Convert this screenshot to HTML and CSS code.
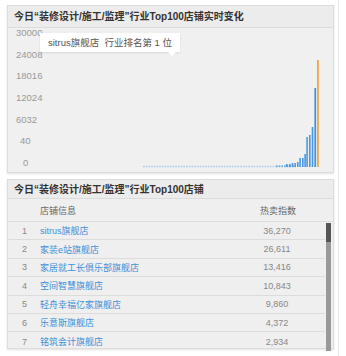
FILE: index.html
```html
<!DOCTYPE html>
<html lang="zh-CN">

<head>
  <meta charset="UTF-8">
  <meta name="viewport" content="width=device-width, initial-scale=1.0">
  <title>行业Top100店铺</title>
  <link rel="stylesheet" href="styles.css">
</head>

<body>
  <div class="page">
    <!-- 实时变化 -->
    <div class="panel chart-panel">
      <div class="panel-title">今日“装修设计/施工/监理”行业Top100店铺实时变化</div>
      <div class="chart">
        <div class="y-axis">
          <span>30000</span>
          <span>24008</span>
          <span>18016</span>
          <span>12024</span>
          <span>6032</span>
          <span class="short">40</span>
          <span class="zero">0</span>
        </div>
        <svg class="plot" width="285" height="145" viewBox="0 0 285 145">
          <line x1="99" y1="138.5" x2="232" y2="138.5" stroke="#a9cdee" stroke-width="1.4" stroke-dasharray="1.6 1.1" />
          <line x1="232" y1="138.2" x2="252" y2="138.2" stroke="#6aaae6" stroke-width="2" stroke-dasharray="1.6 1.1" />
          <rect x="242" y="136" width="1.6" height="3" fill="#4a97e0" />
          <rect x="245" y="136" width="1.6" height="3" fill="#4a97e0" />
          <rect x="247.7" y="135" width="1.6" height="4" fill="#4a97e0" />
          <rect x="250.3" y="135" width="1.6" height="4" fill="#4a97e0" />
          <rect x="253" y="134" width="1.6" height="5" fill="#4a97e0" />
          <rect x="255.3" y="130" width="1.6" height="9" fill="#4a97e0" />
          <rect x="258" y="130" width="1.6" height="9" fill="#4a97e0" />
          <rect x="260.3" y="126" width="1.6" height="13" fill="#4a97e0" />
          <rect x="262.3" y="109" width="1.6" height="30" fill="#4a97e0" />
          <rect x="265" y="107" width="1.6" height="32" fill="#4a97e0" />
          <rect x="267.7" y="99" width="1.6" height="40" fill="#4a97e0" />
          <rect x="270.4" y="60" width="1.7" height="79" fill="#3d8ee0" />
          <rect x="273" y="32" width="1.8" height="107" fill="#f2a644" />
        </svg>
        <div class="tooltip">sitrus旗舰店&nbsp;&nbsp;行业排名第 1 位</div>
      </div>
    </div>

    <!-- 店铺列表 -->
    <div class="panel list-panel">
      <div class="panel-title">今日“装修设计/施工/监理”行业Top100店铺</div>
      <div class="list-head">
        <span class="col-rank"></span>
        <span class="col-name">店铺信息</span>
        <span class="col-value">热卖指数</span>
      </div>
      <div class="list-body">
        <div class="rows">
          <div class="row"><span class="col-rank">1</span><a class="col-name">sitrus旗舰店</a><span class="col-value">36,270</span></div>
          <div class="row"><span class="col-rank">2</span><a class="col-name">家装e站旗舰店</a><span class="col-value">26,611</span></div>
          <div class="row"><span class="col-rank">3</span><a class="col-name">家居就工长俱乐部旗舰店</a><span class="col-value">13,416</span></div>
          <div class="row"><span class="col-rank">4</span><a class="col-name">空间智慧旗舰店</a><span class="col-value">10,843</span></div>
          <div class="row"><span class="col-rank">5</span><a class="col-name">轻舟幸福亿家旗舰店</a><span class="col-value">9,860</span></div>
          <div class="row"><span class="col-rank">6</span><a class="col-name">乐意斯旗舰店</a><span class="col-value">4,372</span></div>
          <div class="row"><span class="col-rank">7</span><a class="col-name">铭筑会计旗舰店</a><span class="col-value">2,934</span></div>
        </div>
        <div class="scrollbar"><div class="thumb"></div></div>
      </div>
    </div>
  </div>
</body>

</html>
```

FILE: styles.css
```css
body {
  margin: 0;
  padding: 0;
  background-color: #fff;
  font-family: "Liberation Sans", "Noto Sans CJK SC", sans-serif;
}

.page {
  width: 339px;
  height: 356px;
  border-right: 1px solid #e6e6e6;
  box-sizing: border-box;
  padding: 5px 0 0 7px;
}

.panel {
  width: 327px;
  background-color: #efefef;
  border: 1px solid #dddddd;
  box-sizing: border-box;
  box-shadow: 0 1px 2px rgba(0, 0, 0, 0.12);
}

.panel-title {
  height: 22px;
  line-height: 22px;
  padding-left: 6px;
  font-size: 10px;
  font-weight: bold;
  color: #333;
  background-color: #ececec;
  border-bottom: 1px solid #dcdcdc;
  box-sizing: border-box;
  white-space: nowrap;
}

/* chart */
.chart-panel {
  height: 168px;
}

.chart {
  position: relative;
  display: flex;
  height: 144px;
  background-color: #f0f0f0;
}

.y-axis {
  width: 36px;
  box-sizing: border-box;
  padding: 0 0 4px 8px;
  display: flex;
  flex-direction: column;
  justify-content: space-between;
  font-size: 9.5px;
  line-height: 10px;
  color: #999;
}

.y-axis .short {
  padding-left: 4px;
}

.y-axis .zero {
  padding-left: 7px;
}

.plot {
  display: block;
}

.tooltip {
  position: absolute;
  left: 32px;
  top: 5px;
  width: 140px;
  height: 19px;
  line-height: 19px;
  padding-left: 8px;
  box-sizing: border-box;
  background-color: #fff;
  font-size: 9.5px;
  color: #555;
  white-space: nowrap;
  box-shadow: 0 1px 2px rgba(0, 0, 0, 0.1);
}

.tooltip::after {
  content: "";
  position: absolute;
  left: 128px;
  bottom: -4px;
  border-left: 4px solid transparent;
  border-right: 4px solid transparent;
  border-top: 4px solid #fff;
}

/* list */
.list-panel {
  margin-top: 6px;
  height: 170px;
}

.list-panel .panel-title {
  height: 19px;
  line-height: 19px;
}

.list-head,
.row {
  display: flex;
  align-items: center;
  font-size: 9px;
}

.list-head {
  height: 22px;
  color: #666;
  border-bottom: 1px solid #dcdcdc;
}

.col-rank {
  width: 32px;
  padding-left: 14px;
  box-sizing: border-box;
  color: #888;
}

.col-name {
  flex: 1;
  color: #3d8fd8;
}

.list-head .col-name {
  color: #666;
}

.col-value {
  width: 68px;
  margin-right: 14px;
  text-align: center;
  color: #888;
}

.list-head .col-value {
  margin-right: 21px;
  color: #666;
}

.list-body {
  display: flex;
}

.rows {
  flex: 1;
}

.row {
  height: 18.4px;
  border-bottom: 1px solid #dcdcdc;
  box-sizing: border-box;
}

.row:last-child {
  border-bottom: none;
}

.scrollbar {
  width: 5px;
  margin: 1px 2px 0 1px;
  background-color: #999;
}

.thumb {
  height: 19px;
  background-color: #555;
}
```
